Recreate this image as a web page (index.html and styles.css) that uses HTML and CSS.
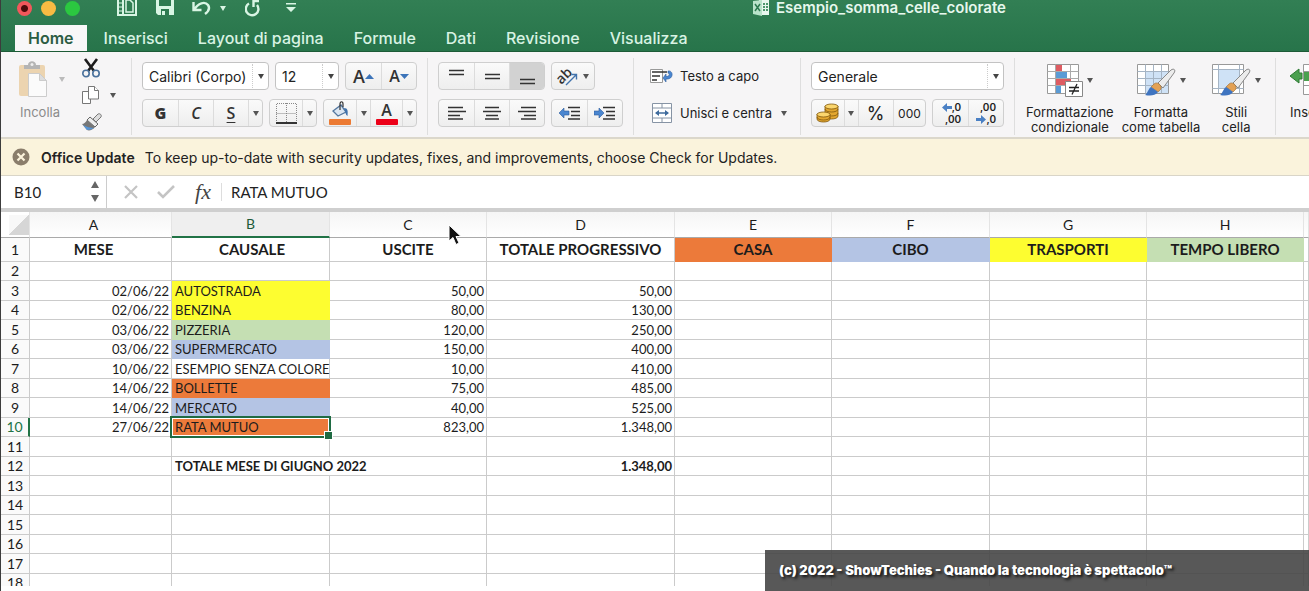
FILE: index.html
```html
<!DOCTYPE html>
<html lang="it">
<head>
<meta charset="utf-8">
<title>Esempio_somma_celle_colorate</title>
<link rel="stylesheet" href="styles.css">
</head>
<body>
<header class="top">
  <div class="titlebar">
    <div class="lights">
      <button class="light red" aria-label="Chiudi"></button>
      <button class="light amber" aria-label="Riduci"></button>
      <button class="light green" aria-label="Ingrandisci"></button>
    </div>
    <div class="quick">
      <button aria-label="Raccolta"><svg width="20" height="18" viewBox="0 0 20 18" fill="none" stroke="#d9f5e4" stroke-width="2"><path d="M1 0v16h18V0M6 0v16"/><path d="M9 0v13h7V4l-3-3H9"  stroke-width="1.5"/><path d="M2 4h3M2 8h3M2 12h3" stroke-width="1"/></svg></button>
      <button class="q-save" aria-label="Salva"><svg width="18" height="18" viewBox="0 0 18 18"><path d="M0 0h18v16H2l-2-2z" fill="#d9f5e4"/><path d="M3 1h12v6H3zM5 10h8v6H5z" fill="#2d7a50"/><path d="M6 12h3v4H6z" fill="#d9f5e4"/></svg></button>
      <button class="q-undo" aria-label="Annulla"><svg width="19" height="16" viewBox="0 0 19 16" fill="none" stroke="#d9f5e4" stroke-width="2.4"><path d="M1.500 2v8h8M2.500 9.500C6 3 13 1 16 5c2 3 1 6-3 9"/></svg></button>
      <button class="q-caret" aria-label="Altre azioni annulla"><svg width="6" height="5" viewBox="0 0 6 5"><path d="M0 0h6L3 5z" fill="#d9f5e4"/></svg></button>
      <button class="q-redo" aria-label="Ripeti"><svg width="16" height="18" viewBox="0 0 16 18" fill="none" stroke="#d9f5e4" stroke-width="2.400"><path d="M4 4.500a6.300 6.300 0 1 0 8 1.500M14 2H8.500v6"/></svg></button>
      <button class="q-more" aria-label="Personalizza"><svg width="10" height="10" viewBox="0 0 10 10" fill="#d9f5e4"><path d="M0 0h10v1.500H0zM0 4h10L5 9z"/></svg></button>
    </div>
    <div class="doc">
      <svg width="16" height="16" viewBox="0 0 16 16"><path d="M6 0h10v15H6z" fill="#e8f7ee"/><path d="M10 3h2v2h-2zM13 3h2v2h-2zM10 6h2v2h-2zM13 6h2v2h-2zM10 9h2v2h-2zM13 9h2v2h-2z" fill="#4c966c"/><path d="M0 1l9-1v16l-9-2z" fill="#b9e3ca"/><path d="M2 4l5 7M7 4l-5 7" stroke="#2d7a50" stroke-width="1.500"/></svg>
      <h1>Esempio_somma_celle_colorate</h1>
    </div>
  </div>
  <nav class="tabs">
    <a class="tab active" href="#home">Home</a>
    <a class="tab" href="#inserisci">Inserisci</a>
    <a class="tab" href="#layout">Layout di pagina</a>
    <a class="tab" href="#formule">Formule</a>
    <a class="tab" href="#dati">Dati</a>
    <a class="tab" href="#revisione">Revisione</a>
    <a class="tab" href="#visualizza">Visualizza</a>
  </nav>
</header>

<section class="ribbon" id="home">
  <div class="group g-clip">
    <button class="paste">
      <span class="paste-top">
        <svg width="30" height="37" viewBox="0 0 30 37"><rect x="1" y="4" width="26" height="31" rx="2" fill="#ecd4b0"/><path d="M6 8V4h4c0-5 8-5 8 0h4v4z" fill="#b4b4b4"/><circle cx="14" cy="3.500" r="1.500" fill="#eee"/><path d="M10.500 12.500h11l7 7v16h-18z" fill="#fbfbfb" stroke="#ccc"/><path d="M21.500 12.500v7h7z" fill="#ddd" stroke="#ccc"/></svg>
        <i class="caret pale"></i>
      </span>
      Incolla
    </button>
    <div class="cliptools">
      <button aria-label="Taglia"><svg width="18" height="20" viewBox="0 0 18 20" fill="none"><path d="M3 1l9 12M15 1L6 13" stroke="#1c1c1c" stroke-width="2.600"/><circle cx="4" cy="15.500" r="3.200" stroke="#4a719c" stroke-width="1.600"/><circle cx="14" cy="15.500" r="3.200" stroke="#4a719c" stroke-width="1.600"/></svg></button>
      <button aria-label="Copia"><svg width="18" height="20" viewBox="0 0 18 20" fill="#fff" stroke="#777"><path d="M.5 6.500h8v12h-8z"/><path d="M6.500 1.500h6l4 4v8.500h-10z"/><path d="M12.500 1.500v4h4"/></svg><i class="caret"></i></button>
      <button aria-label="Copia formato"><svg width="20" height="18" viewBox="0 0 20 18"><path d="M11 6l5-5c2-1 4 1 3 3l-5 5z" fill="#ddd" stroke="#777"/><path d="M8 4l8 7-3 3-8-7z" fill="#eee" stroke="#666"/><path d="M5 7l8 7c-2 3-6 4-8 3l-5-6c2 0 4-2 5-4z" fill="#777"/><path d="M1 12l4 5c3 0 5-1 7-2-4 0-7-1-11-3z" fill="#5795d6"/></svg></button>
    </div>
  </div>

  <div class="group">
    <div class="row">
      <span class="pick p-font"><select aria-label="Tipo di carattere"><option>Calibri (Corpo)</option></select></span>
      <span class="pick p-size"><select aria-label="Dimensione"><option>12</option></select></span>
      <span class="seg">
        <button class="w35" aria-label="Aumenta carattere"><span class="letter">A</span><svg width="9" height="5" viewBox="0 0 9 5"><path d="M0 5h9L4.500 0z" fill="#3c74b9"/></svg></button>
        <button class="w35" aria-label="Riduci carattere"><span class="letter small">A</span><svg width="9" height="5" viewBox="0 0 9 5"><path d="M0 0h9L4.500 5z" fill="#3c74b9"/></svg></button>
      </span>
    </div>
    <div class="row">
      <span class="seg">
        <button class="w35 letter bold">G</button>
        <button class="w35 letter ital">C</button>
        <button class="w35 letter under">S</button>
        <button class="w14" aria-label="Tipi di sottolineatura"><i class="caret"></i></button>
      </span>
      <span class="seg">
        <button class="w32" aria-label="Bordi"><svg width="21" height="21" viewBox="0 0 21 21" fill="none" stroke="#888"><path d="M.5 20V.5h20V20M.5 10.500h20M10.500 0v20" stroke-dasharray="1 1"/><path d="M0 20h21" stroke="#333" stroke-width="2"/></svg></button>
        <button class="w14" aria-label="Tipi di bordo"><i class="caret"></i></button>
      </span>
      <span class="seg">
        <button class="w32" aria-label="Riempimento"><svg width="22" height="24" viewBox="0 0 22 24"><path d="M4 10l8-6 5 7-8 4z" fill="#dbe6f2" stroke="#55789f" stroke-width="1.300"/><path d="M11 9V3c0-3 3-3 3 0v3" fill="none" stroke="#333" stroke-width="1.200"/><path d="M15 7c4 0 4 3 3.500 8-2-1-2-4-3.500-8z" fill="#4173ac"/><rect y="18" width="22" height="6" rx="1" fill="#ec7a33"/></svg></button>
        <button class="w14" aria-label="Colori riempimento"><i class="caret"></i></button>
        <button class="w32 fontcolor" aria-label="Colore carattere">A<i class="bar"></i></button>
        <button class="w14" aria-label="Colori carattere"><i class="caret"></i></button>
      </span>
    </div>
  </div>

  <div class="group">
    <div class="row">
      <span class="seg">
        <button class="w35" aria-label="Allinea in alto"><svg width="15" height="20" viewBox="0 0 15 20" stroke="#333" stroke-width="1.300"><path d="M0 4.500h15M0 8.500h15"/></svg></button>
        <button class="w35" aria-label="Allinea al centro"><svg width="15" height="20" viewBox="0 0 15 20" stroke="#333" stroke-width="1.300"><path d="M0 8.500h15M0 12.500h15"/></svg></button>
        <button class="w35 on" aria-label="Allinea in basso"><svg width="15" height="20" viewBox="0 0 15 20" stroke="#333" stroke-width="1.300"><path d="M0 13.500h15M0 17.500h15"/></svg></button>
      </span>
      <span class="seg">
        <button class="w42" aria-label="Orientamento"><svg class="orient" width="22" height="22" viewBox="0 0 22 22"><text class="ab" x="0" y="16" transform="rotate(-45 7 13)">ab</text><path d="M9 20L19 10M14.500 9.500H19.500V14.500" fill="none" stroke="#4173ac" stroke-width="1.400"/></svg><i class="caret"></i></button>
      </span>
    </div>
    <div class="row">
      <span class="seg">
        <button class="w35" aria-label="Allinea a sinistra"><svg width="18" height="14" viewBox="0 0 18 14" stroke="#333" stroke-width="1.300"><path d="M0 1.500h15M0 5.500h18M0 9.500h12M0 13h15"/></svg></button>
        <button class="w35" aria-label="Centra"><svg width="18" height="14" viewBox="0 0 18 14" stroke="#333" stroke-width="1.300"><path d="M2 1.500h14M0 5.500h18M3 9.500h12M2 13h14"/></svg></button>
        <button class="w35" aria-label="Allinea a destra"><svg width="18" height="14" viewBox="0 0 18 14" stroke="#333" stroke-width="1.300"><path d="M3 1.500h15M0 5.500h18M6 9.500h12M3 13h15"/></svg></button>
      </span>
      <span class="seg">
        <button class="w35" aria-label="Riduci rientro"><svg width="22" height="14" viewBox="0 0 22 14"><path d="M0 7l5-5v3h5v4H5v3z" fill="#4a86d0" stroke="#2d5c9c" stroke-width=".6"/><path d="M9 1.500h12M12 5.500h9M12 9.500h9M9 13h12" stroke="#333" stroke-width="1.300"/></svg></button>
        <button class="w35" aria-label="Aumenta rientro"><svg width="22" height="14" viewBox="0 0 22 14"><path d="M10 7L5 2v3H0v4h5v3z" fill="#4a86d0" stroke="#2d5c9c" stroke-width=".6"/><path d="M9 1.500h12M12 5.500h9M12 9.500h9M9 13h12" stroke="#333" stroke-width="1.300"/></svg></button>
      </span>
    </div>
  </div>

  <div class="group g-wrap">
    <div class="row"><button class="plain"><svg width="24" height="18" viewBox="0 0 24 18"><path d="M.5 2.500h12v13h-12z" fill="#fff" stroke="#999"/><path d="M2 5h15M2 9h8M2 13h5" stroke="#333" stroke-width="1.400"/><path d="M18 4c5-1 6 7 0 8h-2v3l-3-4 3-4v2.500c4 0 4-3 2-3.500z" fill="#4a86d0" stroke="#2d5c9c" stroke-width=".6"/></svg>Testo a capo</button></div>
    <div class="row"><button class="plain"><svg width="24" height="22" viewBox="0 0 24 22"><path d="M2.500 1.500h19v19h-19zM2.500 6h19M2.500 16h19M12 1.500V6M12 16v4.500" fill="#fff" stroke="#8794a5"/><path d="M6 11h12" stroke="#3f6b9d" stroke-width="1.500"/><path d="M5 11l4-3v6zM19 11l-4-3v6z" fill="#3f6b9d"/></svg>Unisci e centra<i class="caret"></i></button></div>
  </div>

  <div class="group g-num">
    <div class="row"><span class="pick p-num"><select aria-label="Formato numero"><option>Generale</option></select></span></div>
    <div class="row">
      <span class="seg">
        <button class="w32" aria-label="Formato contabilità"><svg width="24" height="20" viewBox="0 0 24 20" stroke="#80580c" stroke-width=".8" fill="#e3a72f"><path d="M9 3v10c0 4 13 4 13 0V3z"/><path d="M9 6c0 4 13 4 13 0M9 10c0 4 13 4 13 0" fill="none"/><ellipse cx="15.500" cy="3.500" rx="6.500" ry="2.500" fill="#fbd66d"/><path d="M1 11v5c0 4 13 4 13 0v-5z"/><path d="M1 14c0 4 13 4 13 0" fill="none"/><ellipse cx="7.500" cy="11.500" rx="6.500" ry="2.500" fill="#fbd66d"/></svg></button>
        <button class="w14" aria-label="Valute"><i class="caret"></i></button>
        <button class="w35 pct">%</button>
        <button class="w33 zeros">000</button>
      </span>
      <span class="seg">
        <button class="w35 dec" aria-label="Aumenta decimali"><span><svg width="10" height="9" viewBox="0 0 10 9"><path d="M0 4.500L5 0v3h5v3H5v3z" fill="#4a80c4"/></svg>,0</span><span>,00</span></button>
        <button class="w35 dec" aria-label="Riduci decimali"><span>,00</span><span><svg width="10" height="9" viewBox="0 0 10 9"><path d="M10 4.500L5 0v3H0v3h5v3z" fill="#4a80c4"/></svg>,0</span></button>
      </span>
    </div>
  </div>

  <div class="group g-style">
    <button class="big"><span class="bigicon"><svg width="37" height="34" viewBox="0 0 37 34"><path d="M1.500 1.500h31v29h-31z" fill="#fff" stroke="#999"/><path d="M1.500 8.500h31M1.500 15.500h31M1.500 22.500h31M9.500 1.500v29M24.500 1.500v29" stroke="#aaa" fill="none"/><path d="M10 2h6v6h-6z" fill="#de5c62"/><path d="M10 9h11v6H10z" fill="#5b9bd5"/><path d="M10 16h15v6H10z" fill="#de5c62"/><path d="M10 23h5v7h-5z" fill="#5b9bd5"/><path d="M19.500 18.500h17v15h-17z" fill="#fff" stroke="#888"/><path d="M23 24.500h10M23 28h10M31 21l-5 10.500" stroke="#222" stroke-width="1.300"/></svg><i class="caret"></i></span>Formattazione<br>condizionale</button>
    <button class="big"><span class="bigicon"><svg width="40" height="34" viewBox="0 0 40 34"><path d="M1.500 1.500h31v29h-31z" fill="#fff" stroke="#999"/><path d="M10 9h22v21H10z" fill="#cfe2f6"/><path d="M1.500 8.500h31M1.500 15.500h31M1.500 22.500h31M9.500 1.500v29M17.500 1.500v29M25.500 1.500v29" stroke="#a5b4c4" fill="none"/><path d="M22 20L35 7c3-2 5 0 3 3L27 25z" fill="#ececec" stroke="#888"/><path d="M18 21c3-3 8 1 7 5l-3 3-7-5z" fill="#e3a154" stroke="#9a6b32" stroke-width=".6"/><path d="M15 24l7 5c-3 4-8 4-13 3 3-2 3-6 6-8z" fill="#3f74c0"/></svg><i class="caret"></i></span>Formatta<br>come tabella</button>
    <button class="big"><span class="bigicon"><svg width="40" height="34" viewBox="0 0 40 34"><path d="M1.500 1.500h31v29h-31z" fill="#fff" stroke="#999"/><path d="M8 7h20v18H8z" fill="#cfe2f6"/><path d="M1.500 6.500h31M1.500 25.500h31M7.500 1.500v29M28.500 1.500v29" stroke="#a5b4c4" fill="none"/><path d="M22 20L35 7c3-2 5 0 3 3L27 25z" fill="#ececec" stroke="#888"/><path d="M18 21c3-3 8 1 7 5l-3 3-7-5z" fill="#e3a154" stroke="#9a6b32" stroke-width=".6"/><path d="M15 24l7 5c-3 4-8 4-13 3 3-2 3-6 6-8z" fill="#3f74c0"/></svg><i class="caret"></i></span>Stili<br>cella</button>
  </div>
  <div class="group g-ins">
    <button class="big"><span class="bigicon"><svg width="42" height="34" viewBox="0 0 42 34"><path d="M13.500 1.500h26v30h-26zM13.500 8.500h26M13.500 22.500h26M26.500 1.500v30" fill="#fff" stroke="#999"/><path d="M0 13l9-7v4h3v6H9v4z" fill="#4ba04f" stroke="#2f7a35"/><path d="M14 9h26v9H14z" fill="#4ba04f"/></svg></span>Inserisci</button>
  </div>
</section>

<section class="update">
  <button class="dismiss" aria-label="Chiudi avviso"><svg width="18" height="18" viewBox="0 0 18 18"><circle cx="9" cy="9" r="8.500" fill="#8a7d6b"/><path d="M5.500 5.500l7 7M12.500 5.500l-7 7" stroke="#fbf3dc" stroke-width="2.200"/></svg></button>
  <strong>Office Update</strong>
  <span>To keep up-to-date with security updates, fixes, and improvements, choose Check for Updates.</span>
</section>

<section class="formula">
  <div class="namebox">
    <input class="cellref" aria-label="Casella nome" value="B10">
    <button aria-label="Elenco nomi"><svg width="8" height="22" viewBox="0 0 8 22" fill="#666"><path d="M0 7h8L4 0zM0 14h8l-4 7z"/></svg></button>
  </div>
  <button class="f-no" aria-label="Annulla"><svg width="14" height="14" viewBox="0 0 14 14" stroke="#c4c4c4" stroke-width="2.200"><path d="M1 1l12 12M13 1L1 13"/></svg></button>
  <button class="f-yes" aria-label="Invio"><svg width="18" height="14" viewBox="0 0 18 14" fill="none" stroke="#c4c4c4" stroke-width="2.600"><path d="M1 7l5 5L17 1"/></svg></button>
  <button class="fx">fx</button>
  <input class="fvalue" aria-label="Barra della formula" value="RATA MUTUO">
</section>

<main class="sheet">
  <table>
    <colgroup><col class="c-n"><col class="c-a"><col class="c-b"><col class="c-c"><col class="c-d"><col class="c-c"><col class="c-b"><col class="c-c"><col class="c-c"><col></colgroup>
    <thead><tr><th class="corner"></th><th class="first">A</th><th class="sel">B</th><th>C</th><th>D</th><th>E</th><th>F</th><th>G</th><th>H</th><th></th></tr></thead>
    <tbody>
      <tr class="titles"><th>1</th><td class="first">MESE</td><td>CAUSALE</td><td>USCITE</td><td>TOTALE PROGRESSIVO</td><td class="orange">CASA</td><td class="blue">CIBO</td><td class="yellow">TRASPORTI</td><td class="mint">TEMPO LIBERO</td><td></td></tr>
      <tr><th>2</th><td></td><td></td><td></td><td></td><td></td><td></td><td></td><td></td><td></td></tr>
      <tr><th>3</th><td>02/06/22</td><td class="yellow">AUTOSTRADA</td><td>50,00</td><td>50,00</td><td></td><td></td><td></td><td></td><td></td></tr>
      <tr><th>4</th><td>02/06/22</td><td class="yellow">BENZINA</td><td>80,00</td><td>130,00</td><td></td><td></td><td></td><td></td><td></td></tr>
      <tr><th>5</th><td>03/06/22</td><td class="mint">PIZZERIA</td><td>120,00</td><td>250,00</td><td></td><td></td><td></td><td></td><td></td></tr>
      <tr><th>6</th><td>03/06/22</td><td class="blue">SUPERMERCATO</td><td>150,00</td><td>400,00</td><td></td><td></td><td></td><td></td><td></td></tr>
      <tr><th>7</th><td>10/06/22</td><td>ESEMPIO SENZA COLORE</td><td>10,00</td><td>410,00</td><td></td><td></td><td></td><td></td><td></td></tr>
      <tr><th>8</th><td>14/06/22</td><td class="orange">BOLLETTE</td><td>75,00</td><td>485,00</td><td></td><td></td><td></td><td></td><td></td></tr>
      <tr><th>9</th><td>14/06/22</td><td class="blue">MERCATO</td><td>40,00</td><td>525,00</td><td></td><td></td><td></td><td></td><td></td></tr>
      <tr><th class="sel">10</th><td>27/06/22</td><td class="orange active-cell">RATA MUTUO</td><td>823,00</td><td>1.348,00</td><td></td><td></td><td></td><td></td><td></td></tr>
      <tr><th>11</th><td></td><td></td><td></td><td></td><td></td><td></td><td></td><td></td><td></td></tr>
      <tr class="total"><th>12</th><td></td><td class="label" colspan="2">TOTALE MESE DI GIUGNO 2022</td><td>1.348,00</td><td></td><td></td><td></td><td></td><td></td></tr>
      <tr><th>13</th><td></td><td></td><td></td><td></td><td></td><td></td><td></td><td></td><td></td></tr>
      <tr><th>14</th><td></td><td></td><td></td><td></td><td></td><td></td><td></td><td></td><td></td></tr>
      <tr><th>15</th><td></td><td></td><td></td><td></td><td></td><td></td><td></td><td></td><td></td></tr>
      <tr><th>16</th><td></td><td></td><td></td><td></td><td></td><td></td><td></td><td></td><td></td></tr>
      <tr><th>17</th><td></td><td></td><td></td><td></td><td></td><td></td><td></td><td></td><td></td></tr>
      <tr><th>18</th><td></td><td></td><td></td><td></td><td></td><td></td><td></td><td></td><td></td></tr>
    </tbody>
  </table>
  <svg class="pointer" width="14" height="22" viewBox="0 0 14 22"><path d="M1 1v16l4-3.500 3 7 3-1.500-3-6.500h5z" fill="#111" stroke="#fff"/></svg>
</main>
<footer class="credit">(c) 2022 - ShowTechies - Quando la tecnologia è spettacolo™</footer>
</body>
</html>
```
FILE: styles.css
```css
* { box-sizing: border-box; }
body {
  margin: 0;
  height: 100vh;
  display: flex;
  flex-direction: column;
  overflow: hidden;
  border-left: 1px solid #3c3c3c;
  background: #fff;
  color: #1c1c1c;
  font-family: Inter, "Liberation Sans", sans-serif;
  font-size: 13px;
}
button {
  display: flex;
  align-items: center;
  justify-content: center;
  padding: 0;
  border: 0;
  background: none;
  color: #222;
  font: inherit;
}
button svg, .doc svg { flex: none; display: block; }

/* Title bar and tabs */
.top { flex: none; background: linear-gradient(#327f54, #27744a); border-bottom: 1px solid #1d5b37; }
.titlebar { display: flex; align-items: center; height: 16px; margin-bottom: 9px; padding-left: 16px; }
.lights { display: flex; gap: 9px; margin-right: 37px; }
.light { width: 15px; height: 15px; border-radius: 50%; }
.red { background: radial-gradient(circle, #4d0b0b 3px, #f2575b 4px); }
.amber { background: #f8bb43; }
.green { background: #2bc840; }
.quick { display: flex; align-items: center; width: 190px; }
.q-save { margin-left: 19px; }
.q-undo { margin-left: 18px; }
.q-caret { margin-left: 9px; }
.q-redo { margin-left: 19px; }
.q-more { margin-left: 25px; }
.doc { display: flex; align-items: center; gap: 7px; margin-left: 446px; }
.doc h1 { margin: 0; color: #e6f7ed; font-size: 15px; font-weight: 600; line-height: 18px; }
.tabs { display: flex; padding-left: 14px; }
.tab {
  padding: 0 13px;
  margin-right: 4px;
  color: #d8f3e3;
  font-size: 16px;
  font-weight: 500;
  line-height: 26px;
  text-decoration: none;
}
.tab.active { background: #f8f7f8; color: #2c5c43; font-weight: 600; }

/* Ribbon */
.ribbon {
  flex: none;
  display: flex;
  padding: 6px 0 2px;
  background: #f6f5f6;
  border-bottom: 2px solid #dbd7cb;
  overflow: hidden;
}
.group {
  flex: none;
  display: flex;
  flex-direction: column;
  gap: 9px;
  padding: 4px 10px;
  border-right: 1px solid #dedede;
}
.row { display: flex; gap: 6px; height: 28px; }
.caret {
  flex: none;
  width: 0;
  height: 0;
  border: 3px solid transparent;
  border-top: 5px solid #555;
  border-bottom: 0;
}
.caret.pale { border-top-color: #bbb; }
.g-clip { flex-direction: row; gap: 0; width: 131px; padding: 0 10px 0 15px; }
.paste { flex-direction: column; justify-content: space-between; width: 48px; padding: 3px 0 15px; color: #8b8b8b; }
.paste-top { display: flex; align-items: center; gap: 11px; padding-left: 2px; }
.cliptools { display: flex; flex-direction: column; justify-content: space-between; align-items: flex-start; margin-left: 18px; padding-bottom: 3px; }
.cliptools button { gap: 10px; height: 20px; }
.pick { position: relative; display: block; }
.pick select {
  width: 100%;
  height: 28px;
  padding: 0 6px;
  appearance: none;
  border: 1px solid #c3c3c3;
  border-radius: 4px;
  background: #fff;
  color: #222;
  font: 14px Inter, sans-serif;
}
.pick::after {
  content: "";
  position: absolute;
  top: 12px;
  right: 5px;
  border: 3px solid transparent;
  border-top: 5px solid #444;
  border-bottom: 0;
}
.pick::before {
  content: "";
  position: absolute;
  top: 2px;
  bottom: 2px;
  right: 16px;
  border-left: 1px dotted #ccc;
}
.p-font { width: 127px; }
.p-size { width: 64px; }
.p-num { width: 193px; }
.seg {
  display: flex;
  border: 1px solid #cfcfcf;
  border-radius: 4px;
  background: linear-gradient(#fafafa, #eee);
  overflow: hidden;
}
.seg button + button { border-left: 1px solid #dcdcdc; }
.w14 { width: 14px; }
.w32 { width: 32px; }
.w33 { width: 33px; }
.w35 { width: 35px; }
.w42 { width: 42px; gap: 4px; }
.on { background: #d2d2d2; }
.letter { color: #333; font-family: "Open Sans", sans-serif; font-size: 18px; font-weight: 600; line-height: 20px; }
.letter.small { font-size: 16px; }
.seg .bold { font-size: 16px; font-weight: 800; }
.seg .ital { font-size: 16px; font-style: italic; }
.seg .under { font-size: 16px; text-decoration: underline; text-underline-offset: 3px; }
.fontcolor { flex-direction: column; color: #333; font: 600 16px/18px "Open Sans", sans-serif; }
.bar { width: 22px; height: 6px; border-radius: 1px; background: #ec0018; }
.orient { overflow: visible; }
.ab { font: 600 14px "Open Sans", sans-serif; fill: #333; }
.g-wrap { width: 167px; padding: 4px 12px; }
.plain { gap: 6px; padding-left: 4px; }
.plain .caret { margin-left: 3px; }
.g-num { width: 214px; }
.pct { font-size: 18px; }
.zeros { font-size: 12px; }
.dec { flex-direction: column; align-items: flex-end; padding-right: 7px; font-size: 10px; font-weight: 600; line-height: 12px; }
.dec span { display: flex; align-items: center; }
.g-style { flex-direction: row; gap: 8px; padding: 0 11px; width: 261px; }
.big { flex-direction: column; justify-content: flex-start; line-height: 15px; text-align: center; white-space: nowrap; }
.bigicon { display: flex; align-items: center; gap: 4px; height: 34px; margin: 5px 0 8px; }
.g-style .big:last-child { width: 56px; }
.g-ins { border: 0; padding: 0 14px; }
.g-ins .big { align-items: flex-start; }

/* Update notice */
.update { flex: none; display: flex; align-items: center; height: 37px; padding-left: 11px; border-bottom: 1px solid #d9d5c8; background: #faf3dc; font-size: 14px; color: #222; }
.update strong { margin: 0 10px 0 11px; font-weight: 600; }

/* Formula bar */
.formula { flex: none; display: flex; align-items: center; height: 32px; }
.formula input { border: 0; padding: 0; background: none; color: #222; font: 15px Lato, sans-serif; outline: 0; }
.namebox { display: flex; align-items: center; align-self: stretch; width: 106px; padding: 0 7px 0 13px; border-right: 1px solid #ccc; }
.namebox .cellref { flex: 1; width: 0; }
.f-no { margin-left: 17px; }
.f-yes { margin-left: 19px; }
.fx { margin-left: 14px; width: 28px; color: #444; font: italic 22px/24px "Liberation Serif", serif; }
.formula .fvalue { flex: 1; margin-left: 4px; padding-left: 9px; border-left: 1px solid #ddd; }

/* Sheet */
.sheet { position: relative; flex: 1; min-height: 0; margin-bottom: 5px; overflow: hidden; border-top: 4px solid #cfcfcf; }
table { width: 100%; table-layout: fixed; border-collapse: separate; border-spacing: 0; font: 13px Lato, sans-serif; }
.c-n { width: 29px; }
.c-a { width: 142px; }
.c-b { width: 158px; }
.c-c { width: 157px; }
.c-d { width: 188px; }
th, td { height: 19px; padding: 0 2px; border-right: 1px solid #cbcbcb; border-bottom: 1px solid #cbcbcb; line-height: 18px; white-space: nowrap; }
tbody tr:nth-child(odd) > * { height: 20px; }
td { text-align: right; }
td:nth-child(3) { padding-left: 3px; padding-right: 0; text-align: left; }
th { font-weight: 400; }
tbody th { background: #fafafa; font-size: 14px; }
thead th { height: 26px; background: linear-gradient(#f5f5f5, #fff); border-right-color: #e4e4e4; border-bottom-color: #aaa; font-size: 14px; }
thead th.sel { background: #efefef; border-bottom: 2px solid #217346; color: #1d5b3a; }
tbody th.sel { border-right: 2px solid #217346; color: #217346; }
thead .corner { background: linear-gradient(135deg, #f8f8f8 50%, #d6d6d6 50%) 100% 60% / 20px 20px no-repeat; }
tbody .titles > * { height: 24px; line-height: 23px; }
.titles td:nth-child(n) { font-size: 15px; font-weight: 700; text-align: center; }
thead .first, .titles .first:nth-child(n) { padding-right: 16px; }
.total td { font-weight: 700; }
.orange { background: #ec7a3a; border-color: #ec7a3a; }
.blue { background: #b4c4e4; border-color: #b4c4e4; }
.yellow { background: #fdfd30; border-color: #fdfd30; }
.mint { background: #c5dfb3; border-color: #c5dfb3; }
.active-cell { position: relative; }
.active-cell::before { content: ""; position: absolute; inset: -2px; border: 2px solid #1f6b43; box-shadow: inset 0 0 0 1px #fff; }
.active-cell::after { content: ""; position: absolute; right: -4px; bottom: -4px; width: 7px; height: 7px; border: 1px solid #fff; background: #1f6b43; }
.pointer { position: absolute; left: 447px; top: 12px; }

.credit {
  position: absolute;
  right: 0;
  bottom: 0;
  width: 544px;
  padding: 0 14px;
  background: rgba(70, 70, 70, .9);
  color: #fff;
  font-size: 13px;
  font-weight: 900;
  line-height: 41px;
  text-shadow: 2px 2px 3px #111;
}
```
